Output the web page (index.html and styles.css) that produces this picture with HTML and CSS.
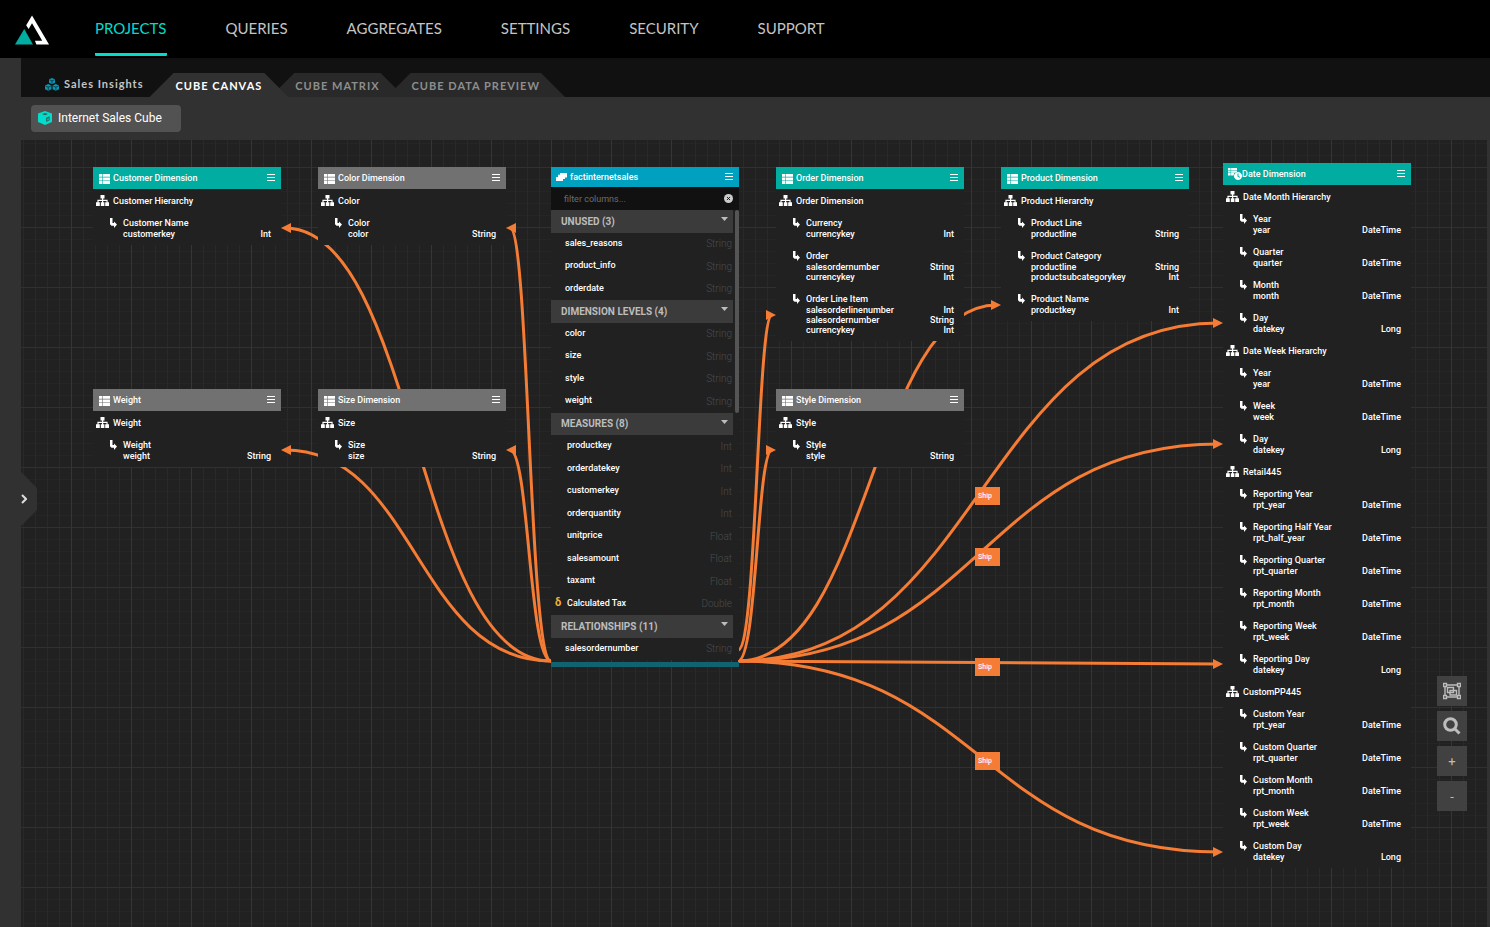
FILE: index.html
```html
<!DOCTYPE html>
<html lang="en">
<head>
    <meta charset="UTF-8">
    <meta name="viewport" content="width=device-width, initial-scale=1.0">
    <title>Internet Sales Cube</title>
    <link rel="stylesheet" href="styles.css">
</head>
<body>

<!-- Shared icons -->
<svg class="sprite" width="0" height="0" aria-hidden="true">
    <symbol id="i-table" viewBox="0 0 11 10">
        <path d="M0 0h3v2.8H0zM3.6 0H11v2.8H3.6zM0 3.4h3v2.8H0zM3.6 3.4H11v2.8H3.6zM0 6.8h3V10H0zM3.6 6.8H11V10H3.6z"/>
    </symbol>
    <symbol id="i-tree" viewBox="0 0 13 11">
        <path d="M4.500 0h4v3.500H7.200v1.300h4.400v2.400H13V11H9.200V7.200h1.300V6H7.200v1.200h1.200V11H4.800V7.200H6V6H2.600v1.200h1.200V11H0V7.200h1.400V4.800H6V3.500H4.500z"/>
    </symbol>
    <symbol id="i-level" viewBox="0 0 7 10">
        <path d="M0 0h2.500v5h1.500V3.500l3 3L4 10V7.700H1.500L0 6.200z"/>
    </symbol>
    <symbol id="i-menu" viewBox="0 0 8 8">
        <path d="M0 0h8v1H0zM0 3h8v1H0zM0 6h8v1H0z"/>
    </symbol>
    <symbol id="i-fact" viewBox="0 0 11 8">
        <path d="M4 0h7v4.500H4zM2 1.800h7V6H2zM0 4h7v4H0z"/>
    </symbol>
    <symbol id="i-date" viewBox="0 0 14 12">
        <path d="M0 0h2.600v2H0zM3.100 0H9v2H3.100zM0 2.500h2.600v2H0zM3.100 2.500H9v1.200L7 4.800H3.100zM0 5h2.600v2.500H0zM3.100 5H6L5.600 7.500H3.100z"/>
        <path fill-rule="evenodd" d="M10 4a4 4 0 1 0 .01 0zM9.500 5.500h1V8l1.700 1-.5.8-2.200-1.200z"/>
    </symbol>
    <symbol id="i-caret" viewBox="0 0 7 4">
        <path d="M0 0h7L3.500 4z"/>
    </symbol>
</svg>

<header class="topbar">
    <svg class="logo" viewBox="0 0 36 30" aria-label="Logo">
        <path class="logo-accent" d="M0 30 9.500 14 18.500 30z"/>
        <path class="logo-main" d="M17.500 0 35 30H22l-1.500-4H28L17.500 8 14 14l-2.500-4z"/>
    </svg>
    <nav class="main-nav">
        <a href="#" class="active">PROJECTS</a>
        <a href="#">QUERIES</a>
        <a href="#">AGGREGATES</a>
        <a href="#">SETTINGS</a>
        <a href="#">SECURITY</a>
        <a href="#">SUPPORT</a>
    </nav>
</header>

<div class="workspace">
    <aside class="rail">
        <button class="rail-handle" aria-label="Expand panel">
            <svg viewBox="0 0 6 10"><path d="M1 1l4 4-4 4"/></svg>
        </button>
    </aside>

    <main class="main">
        <div class="tabs">
            <a href="#" class="project">
                <svg viewBox="0 0 14 13">
                    <path d="M7 0l3 1.300v3.400L7 6.200 4 4.700V1.300zM3.200 6l3.200 1.400v3.800L3.200 12.800 0 11.200V7.400zM10.800 6 14 7.400v3.800l-3.200 1.600-3.200-1.600V7.400z"/>
                    <path class="cut" d="M4.500 1.800 7 2.900l2.500-1.100M7 3v2.600M.5 8l2.700 1.200L6 8M3.300 9.200v3M8.200 8l2.600 1.200L13.500 8M10.900 9.200v3"/>
                </svg>
                Sales Insights
            </a>
            <a href="#" class="tab active">CUBE CANVAS</a>
            <a href="#" class="tab">CUBE MATRIX</a>
            <a href="#" class="tab">CUBE DATA PREVIEW</a>
        </div>

        <div class="toolbar">
            <button class="cube-button">
                <svg viewBox="0 0 14 14">
                    <path d="M7 0l7 2.500v8.500L7 14 0 11V2.500z"/>
                    <path class="cut" d="M4 3l3-1 3 1-3 1.200zM8.200 6.800 11.600 5.300v4L8.200 11z"/>
                    <path d="M9.400 7.400l1.200-.5v2l-1.200.5z"/>
                </svg>
                Internet Sales Cube
            </button>
        </div>

        <div class="canvas">
            <svg class="edges" aria-hidden="true">
                <defs>
                    <marker id="arrow-left" viewBox="0 0 10 10" markerWidth="10" markerHeight="10" refX="4" refY="5" markerUnits="userSpaceOnUse">
                        <path d="M10 0 0 5l10 5z"/>
                    </marker>
                    <marker id="arrow-right" viewBox="0 0 10 10" markerWidth="10" markerHeight="10" refX="6" refY="5" markerUnits="userSpaceOnUse">
                        <path d="M0 0 10 5 0 10z"/>
                    </marker>
                </defs>
                <path class="to-left" d="M530 521C395 521 395 88 264 88"/>
                <path class="to-left" d="M530 521C508 521 508 88 489 88"/>
                <path class="to-left" d="M530 521C395 521 395 310 264 310"/>
                <path class="to-left" d="M530 521C508 521 508 310 489 310"/>
                <path class="to-right" d="M717 510C736 510 736 175 751 175"/>
                <path class="to-right" d="M717 521C736 521 736 310 751 310"/>
                <path class="to-right" d="M717 521C849 521 849 165 976 165"/>
                <path class="to-right" d="M717 521C960 521 960 183 1198 183"/>
                <path class="to-right" d="M717 521C960 521 960 304 1198 304"/>
                <path class="to-right" d="M717 521C960 521 960 524 1198 524"/>
                <path class="to-right" d="M717 521C960 521 960 712 1198 712"/>
            </svg>

            <span class="edge-label ship-1">Ship</span>
            <span class="edge-label ship-2">Ship</span>
            <span class="edge-label ship-3">Ship</span>
            <span class="edge-label ship-4">Ship</span>

            <section class="node shared customer">
                <div class="node-header">
                    <svg class="icon-table"><use href="#i-table"/></svg>
                    <h2>Customer Dimension</h2>
                    <button class="menu" aria-label="Menu"><svg><use href="#i-menu"/></svg></button>
                </div>
                <h3><svg><use href="#i-tree"/></svg>Customer Hierarchy</h3>
                <div class="level">
                    <svg><use href="#i-level"/></svg>
                    <h4>Customer Name</h4>
                    <p>customerkey<span>Int</span></p>
                </div>
            </section>

            <section class="node color">
                <div class="node-header">
                    <svg class="icon-table"><use href="#i-table"/></svg>
                    <h2>Color Dimension</h2>
                    <button class="menu" aria-label="Menu"><svg><use href="#i-menu"/></svg></button>
                </div>
                <h3><svg><use href="#i-tree"/></svg>Color</h3>
                <div class="level">
                    <svg><use href="#i-level"/></svg>
                    <h4>Color</h4>
                    <p>color<span>String</span></p>
                </div>
            </section>

            <section class="node weight">
                <div class="node-header">
                    <svg class="icon-table"><use href="#i-table"/></svg>
                    <h2>Weight</h2>
                    <button class="menu" aria-label="Menu"><svg><use href="#i-menu"/></svg></button>
                </div>
                <h3><svg><use href="#i-tree"/></svg>Weight</h3>
                <div class="level">
                    <svg><use href="#i-level"/></svg>
                    <h4>Weight</h4>
                    <p>weight<span>String</span></p>
                </div>
            </section>

            <section class="node size">
                <div class="node-header">
                    <svg class="icon-table"><use href="#i-table"/></svg>
                    <h2>Size Dimension</h2>
                    <button class="menu" aria-label="Menu"><svg><use href="#i-menu"/></svg></button>
                </div>
                <h3><svg><use href="#i-tree"/></svg>Size</h3>
                <div class="level">
                    <svg><use href="#i-level"/></svg>
                    <h4>Size</h4>
                    <p>size<span>String</span></p>
                </div>
            </section>

            <section class="node fact">
                <div class="node-header">
                    <svg class="icon-fact"><use href="#i-fact"/></svg>
                    <h2>factinternetsales</h2>
                    <button class="menu" aria-label="Menu"><svg><use href="#i-menu"/></svg></button>
                </div>
                <div class="filter">
                    <input type="text" placeholder="filter columns..." aria-label="Filter columns">
                    <button class="clear" aria-label="Clear filter">
                        <svg viewBox="0 0 10 10"><circle cx="5" cy="5" r="5"/><path d="M3.300 3.300l3.400 3.400M6.700 3.300 3.300 6.700"/></svg>
                    </button>
                </div>
                <div class="scroller">
                    <ul class="columns">
                        <li class="group">UNUSED (3)<svg><use href="#i-caret"/></svg></li>
                        <li>sales_reasons<span>String</span></li>
                        <li>product_info<span>String</span></li>
                        <li>orderdate<span>String</span></li>
                        <li class="group">DIMENSION LEVELS (4)<svg><use href="#i-caret"/></svg></li>
                        <li>color<span>String</span></li>
                        <li>size<span>String</span></li>
                        <li>style<span>String</span></li>
                        <li>weight<span>String</span></li>
                        <li class="group">MEASURES (8)<svg><use href="#i-caret"/></svg></li>
                        <li class="measure">productkey<span>Int</span></li>
                        <li class="measure">orderdatekey<span>Int</span></li>
                        <li class="measure">customerkey<span>Int</span></li>
                        <li class="measure">orderquantity<span>Int</span></li>
                        <li class="measure">unitprice<span>Float</span></li>
                        <li class="measure">salesamount<span>Float</span></li>
                        <li class="measure">taxamt<span>Float</span></li>
                        <li class="measure calculated"><b>δ</b>Calculated Tax<span>Double</span></li>
                        <li class="group">RELATIONSHIPS (11)<svg><use href="#i-caret"/></svg></li>
                        <li>salesordernumber<span>String</span></li>
                    </ul>
                    <div class="thumb"></div>
                </div>
                <div class="resize-bar"></div>
            </section>

            <section class="node shared order">
                <div class="node-header">
                    <svg class="icon-table"><use href="#i-table"/></svg>
                    <h2>Order Dimension</h2>
                    <button class="menu" aria-label="Menu"><svg><use href="#i-menu"/></svg></button>
                </div>
                <h3><svg><use href="#i-tree"/></svg>Order Dimension</h3>
                <div class="level">
                    <svg><use href="#i-level"/></svg>
                    <h4>Currency</h4>
                    <p>currencykey<span>Int</span></p>
                </div>
                <div class="level">
                    <svg><use href="#i-level"/></svg>
                    <h4>Order</h4>
                    <p>salesordernumber<span>String</span></p>
                    <p>currencykey<span>Int</span></p>
                </div>
                <div class="level">
                    <svg><use href="#i-level"/></svg>
                    <h4>Order Line Item</h4>
                    <p>salesorderlinenumber<span>Int</span></p>
                    <p>salesordernumber<span>String</span></p>
                    <p>currencykey<span>Int</span></p>
                </div>
            </section>

            <section class="node style">
                <div class="node-header">
                    <svg class="icon-table"><use href="#i-table"/></svg>
                    <h2>Style Dimension</h2>
                    <button class="menu" aria-label="Menu"><svg><use href="#i-menu"/></svg></button>
                </div>
                <h3><svg><use href="#i-tree"/></svg>Style</h3>
                <div class="level">
                    <svg><use href="#i-level"/></svg>
                    <h4>Style</h4>
                    <p>style<span>String</span></p>
                </div>
            </section>

            <section class="node shared product">
                <div class="node-header">
                    <svg class="icon-table"><use href="#i-table"/></svg>
                    <h2>Product Dimension</h2>
                    <button class="menu" aria-label="Menu"><svg><use href="#i-menu"/></svg></button>
                </div>
                <h3><svg><use href="#i-tree"/></svg>Product Hierarchy</h3>
                <div class="level">
                    <svg><use href="#i-level"/></svg>
                    <h4>Product Line</h4>
                    <p>productline<span>String</span></p>
                </div>
                <div class="level">
                    <svg><use href="#i-level"/></svg>
                    <h4>Product Category</h4>
                    <p>productline<span>String</span></p>
                    <p>productsubcategorykey<span>Int</span></p>
                </div>
                <div class="level">
                    <svg><use href="#i-level"/></svg>
                    <h4>Product Name</h4>
                    <p>productkey<span>Int</span></p>
                </div>
            </section>

            <section class="node shared date">
                <div class="node-header">
                    <svg class="icon-date"><use href="#i-date"/></svg>
                    <h2>Date Dimension</h2>
                    <button class="menu" aria-label="Menu"><svg><use href="#i-menu"/></svg></button>
                </div>
                <h3><svg><use href="#i-tree"/></svg>Date Month Hierarchy</h3>
                <div class="level">
                    <svg><use href="#i-level"/></svg>
                    <h4>Year</h4>
                    <p>year<span>DateTime</span></p>
                </div>
                <div class="level">
                    <svg><use href="#i-level"/></svg>
                    <h4>Quarter</h4>
                    <p>quarter<span>DateTime</span></p>
                </div>
                <div class="level">
                    <svg><use href="#i-level"/></svg>
                    <h4>Month</h4>
                    <p>month<span>DateTime</span></p>
                </div>
                <div class="level">
                    <svg><use href="#i-level"/></svg>
                    <h4>Day</h4>
                    <p>datekey<span>Long</span></p>
                </div>
                <h3><svg><use href="#i-tree"/></svg>Date Week Hierarchy</h3>
                <div class="level">
                    <svg><use href="#i-level"/></svg>
                    <h4>Year</h4>
                    <p>year<span>DateTime</span></p>
                </div>
                <div class="level">
                    <svg><use href="#i-level"/></svg>
                    <h4>Week</h4>
                    <p>week<span>DateTime</span></p>
                </div>
                <div class="level">
                    <svg><use href="#i-level"/></svg>
                    <h4>Day</h4>
                    <p>datekey<span>Long</span></p>
                </div>
                <h3><svg><use href="#i-tree"/></svg>Retail445</h3>
                <div class="level">
                    <svg><use href="#i-level"/></svg>
                    <h4>Reporting Year</h4>
                    <p>rpt_year<span>DateTime</span></p>
                </div>
                <div class="level">
                    <svg><use href="#i-level"/></svg>
                    <h4>Reporting Half Year</h4>
                    <p>rpt_half_year<span>DateTime</span></p>
                </div>
                <div class="level">
                    <svg><use href="#i-level"/></svg>
                    <h4>Reporting Quarter</h4>
                    <p>rpt_quarter<span>DateTime</span></p>
                </div>
                <div class="level">
                    <svg><use href="#i-level"/></svg>
                    <h4>Reporting Month</h4>
                    <p>rpt_month<span>DateTime</span></p>
                </div>
                <div class="level">
                    <svg><use href="#i-level"/></svg>
                    <h4>Reporting Week</h4>
                    <p>rpt_week<span>DateTime</span></p>
                </div>
                <div class="level">
                    <svg><use href="#i-level"/></svg>
                    <h4>Reporting Day</h4>
                    <p>datekey<span>Long</span></p>
                </div>
                <h3><svg><use href="#i-tree"/></svg>CustomPP445</h3>
                <div class="level">
                    <svg><use href="#i-level"/></svg>
                    <h4>Custom Year</h4>
                    <p>rpt_year<span>DateTime</span></p>
                </div>
                <div class="level">
                    <svg><use href="#i-level"/></svg>
                    <h4>Custom Quarter</h4>
                    <p>rpt_quarter<span>DateTime</span></p>
                </div>
                <div class="level">
                    <svg><use href="#i-level"/></svg>
                    <h4>Custom Month</h4>
                    <p>rpt_month<span>DateTime</span></p>
                </div>
                <div class="level">
                    <svg><use href="#i-level"/></svg>
                    <h4>Custom Week</h4>
                    <p>rpt_week<span>DateTime</span></p>
                </div>
                <div class="level">
                    <svg><use href="#i-level"/></svg>
                    <h4>Custom Day</h4>
                    <p>datekey<span>Long</span></p>
                </div>
            </section>

            <div class="zoom-controls">
                <button aria-label="Fit to screen">
                    <svg viewBox="0 0 18 16">
                        <path class="line" d="M2 2h14v12H2zM7 7.500h6.500V12H7zM4.500 4.500h6v5h-6z"/>
                        <path class="corner" d="M.5.5h3v3h-3zM14.500.5h3v3h-3zM.5 12.500h3v3h-3zM14.500 12.500h3v3h-3z"/>
                    </svg>
                </button>
                <button aria-label="Reset zoom">
                    <svg viewBox="0 0 18 18">
                        <circle class="lens" cx="7.500" cy="7.500" r="5.800"/>
                        <path class="lens" d="M12 12l4.500 4.500"/>
                    </svg>
                </button>
                <button>+</button>
                <button>-</button>
            </div>
        </div>
    </main>
</div>

</body>
</html>
```
FILE: styles.css
```css
/* Global Styles */
* {
    box-sizing: border-box;
}

body {
    margin: 0;
    min-height: 100vh;
    display: flex;
    flex-direction: column;
    background: #313131;
    color: #fff;
    font-family: Roboto, "Liberation Sans", sans-serif;
}

h2, h3, h4, p, ul {
    margin: 0;
    padding: 0;
    font-weight: 500;
}

a {
    color: inherit;
    text-decoration: none;
}

button {
    border: none;
    padding: 0;
    color: inherit;
    font-family: inherit;
    cursor: pointer;
}

svg {
    fill: currentColor;
}

.sprite {
    position: absolute;
}

/* Top bar */
.topbar {
    height: 58px;
    background: #000;
    display: flex;
    align-items: center;
    padding: 0 15px;
}

.logo {
    width: 35px;
    height: 30px;
    margin-top: 2px;
}

.logo-accent {
    fill: #00ada0;
}

.main-nav {
    align-self: stretch;
    display: flex;
    gap: 59px;
    margin-left: 45px;
    font-family: Lato, sans-serif;
    font-size: 15px;
    line-height: 56px;
    color: #c4c4c4;
}

.main-nav a {
    height: 56px;
}

.main-nav .active {
    color: #00ddcb;
    border-bottom: 3px solid #00ddcb;
    border-radius: 1px;
}

/* Workspace */
.workspace {
    flex: 1;
    display: flex;
}

.rail {
    width: 21px;
    position: relative;
    background: #313131;
}

.rail-handle {
    position: absolute;
    z-index: 2;
    left: 21px;
    top: 414px;
    width: 16px;
    height: 54px;
    background: #313131;
    clip-path: polygon(0 0, 100% 16px, 100% 38px, 0 100%);
    text-align: left;
}

.rail-handle svg {
    display: block;
    width: 6px;
    height: 10px;
    fill: none;
    stroke: #ddd;
    stroke-width: 2;
}

.main {
    flex: 1;
    min-width: 0;
    display: flex;
    flex-direction: column;
}

/* Tabs */
.tabs {
    height: 39px;
    display: flex;
    align-items: flex-end;
    background: #111;
    font-family: Lato, sans-serif;
    font-size: 11px;
    font-weight: 700;
    letter-spacing: 1px;
    line-height: 24px;
}

.project {
    display: flex;
    align-items: center;
    gap: 5px;
    margin: 0 6px 0 24px;
    color: #c4c4c4;
    align-self: center;
    padding-top: 13px;
}

.project svg {
    width: 14px;
    height: 13px;
    fill: #0796b4;
}

.project .cut {
    fill: none;
    stroke: #111;
    stroke-width: 0.6;
}

.tab {
    height: 24px;
    padding: 1px 25px 0;
    background: #292929;
    color: #8e8e8e;
    clip-path: polygon(24px 0, calc(100% - 24px) 0, 100% 100%, 0 100%);
}

.tab + .tab {
    margin-left: -18px;
}

.tab.active {
    position: relative;
    z-index: 1;
    padding: 1px 26px 0;
    background: #313131;
    color: #fff;
}

/* Toolbar */
.toolbar {
    padding: 8px 10px;
    background: #313131;
}

.cube-button {
    display: flex;
    align-items: center;
    gap: 6px;
    height: 27px;
    padding: 0 19px 2px 7px;
    border-radius: 4px;
    background: #525252;
    font-size: 12px;
}

.cube-button svg {
    width: 14px;
    height: 14px;
    fill: #00ddcb;
}

.cube-button .cut {
    fill: #3d5a58;
}

/* Canvas */
.canvas {
    flex: 1;
    position: relative;
    min-height: 740px;
    margin-right: 3px;
    overflow: hidden;
    background-color: #212121;
    background-image:
        linear-gradient(to right, #353535 1px, transparent 1px),
        linear-gradient(to bottom, #303030 1px, transparent 1px),
        linear-gradient(to right, #292929 1px, transparent 1px),
        linear-gradient(to bottom, #252525 1px, transparent 1px);
    background-size: 60px 60px, 60px 60px, 12px 12px, 12px 12px;
    background-position: 50px 27px;
}

.edges {
    position: absolute;
    inset: 0;
    width: 100%;
    height: 100%;
    fill: #f57c35;
}

.to-left, .to-right {
    fill: none;
    stroke: #f57c35;
    stroke-width: 3;
}

.to-left {
    marker-end: url(#arrow-left);
}

.to-right {
    marker-end: url(#arrow-right);
}

.edges marker {
    fill: #f57c35;
}

.edge-label {
    position: absolute;
    left: 954px;
    width: 25px;
    height: 18px;
    padding-left: 3px;
    background: #f57c35;
    font-size: 7px;
    font-weight: 500;
    line-height: 18px;
}

.ship-1 { top: 347px; }
.ship-2 { top: 408px; }
.ship-3 { top: 518px; }
.ship-4 { top: 612px; }

/* Nodes */
.node {
    position: absolute;
    width: 188px;
    background: #212121;
    font-size: 9px;
}

.customer { left: 72px; top: 27px; }
.weight { left: 72px; top: 249px; }
.color { left: 297px; top: 27px; }
.size { left: 297px; top: 249px; }
.fact { left: 530px; top: 27px; }
.order { left: 755px; top: 27px; }
.style { left: 755px; top: 249px; }
.product { left: 980px; top: 27px; }
.date { left: 1202px; top: 23px; }

.node-header {
    display: flex;
    align-items: center;
    height: 22px;
    margin-bottom: 1px;
    padding: 0 6px 0 5px;
    background: #717171;
}

.shared .node-header {
    background: #00ada0;
}

.node h2, .node h3, .node h4 {
    font-size: 9px;
}

.node h2 {
    flex: 1;
}

.icon-table {
    width: 11px;
    height: 10px;
    margin: 2px 3px 0 1px;
}

.icon-date {
    width: 14px;
    height: 12px;
}

.icon-fact {
    width: 11px;
    height: 8px;
    margin-right: 3px;
}

.menu {
    display: flex;
    background: none;
}

.menu svg {
    width: 8px;
    height: 8px;
}

.node h3 {
    display: flex;
    align-items: center;
    gap: 4px;
    height: 22px;
    padding: 0 0 1px 3px;
}

.node h3 svg {
    width: 13px;
    height: 11px;
}

.level {
    position: relative;
    padding: 5px 10px 6px 30px;
}

.level svg {
    position: absolute;
    left: 17px;
    top: 6px;
    width: 7px;
    height: 10px;
}

.level h4 {
    line-height: 12px;
}

.level p {
    display: flex;
    justify-content: space-between;
    line-height: 10px;
}

/* Fact table */
.fact {
    background: none;
}

.fact .node-header {
    height: 20px;
    margin: 0;
    background: #00a0c0;
}

.filter {
    display: flex;
    align-items: center;
    height: 23px;
    padding: 0 6px 0 13px;
    background: #111;
}

.filter input {
    flex: 1;
    min-width: 0;
    padding: 0;
    border: none;
    outline: none;
    background: none;
    color: #fff;
    font-family: inherit;
    font-size: 9px;
}

.filter input::placeholder {
    color: #6d6d6d;
}

.clear {
    display: flex;
    background: none;
    color: #ccc;
}

.clear svg {
    width: 9px;
    height: 9px;
    stroke-width: 1;
}

.clear path {
    stroke: #111;
}

.scroller {
    display: flex;
    gap: 2px;
    height: 450px;
    background: #212121;
}

.columns {
    flex: 1;
    display: grid;
    grid-auto-rows: 1fr;
    list-style: none;
}

.columns li {
    position: relative;
    display: flex;
    align-items: center;
    padding: 0 1px 2px 14px;
}

.columns li span {
    margin-left: auto;
    padding-top: 2px;
    color: #4c4c4c;
    font-size: 10px;
    font-weight: 300;
}

.columns .measure {
    padding-left: 16px;
}

.calculated b {
    position: absolute;
    left: 4px;
    color: #f5b335;
    font-size: 11px;
}

.columns .group {
    justify-content: space-between;
    padding: 0 5px 0 10px;
    background: #3b3b3b;
    color: #bdbdbd;
    font-size: 10px;
    font-weight: 700;
}

.group svg {
    width: 7px;
    height: 4px;
    margin-bottom: 4px;
}

.thumb {
    width: 4px;
    height: 203px;
    border-radius: 2px;
    background: #555;
}

.resize-bar {
    height: 5px;
    margin-top: 2px;
    background: #106370;
}

/* Zoom controls */
.zoom-controls {
    position: absolute;
    right: 20px;
    bottom: 116px;
    display: flex;
    flex-direction: column;
    gap: 5px;
}

.zoom-controls button {
    display: flex;
    align-items: center;
    justify-content: center;
    width: 30px;
    height: 30px;
    background: #414141;
    color: #bdbdbd;
    font-size: 13px;
}

.zoom-controls svg {
    width: 18px;
    height: 18px;
}

.zoom-controls .line, .zoom-controls .corner {
    fill: #414141;
    stroke: #bdbdbd;
    stroke-width: 1.4;
}

.zoom-controls .lens {
    fill: none;
    stroke: #bdbdbd;
    stroke-width: 3;
}
```
